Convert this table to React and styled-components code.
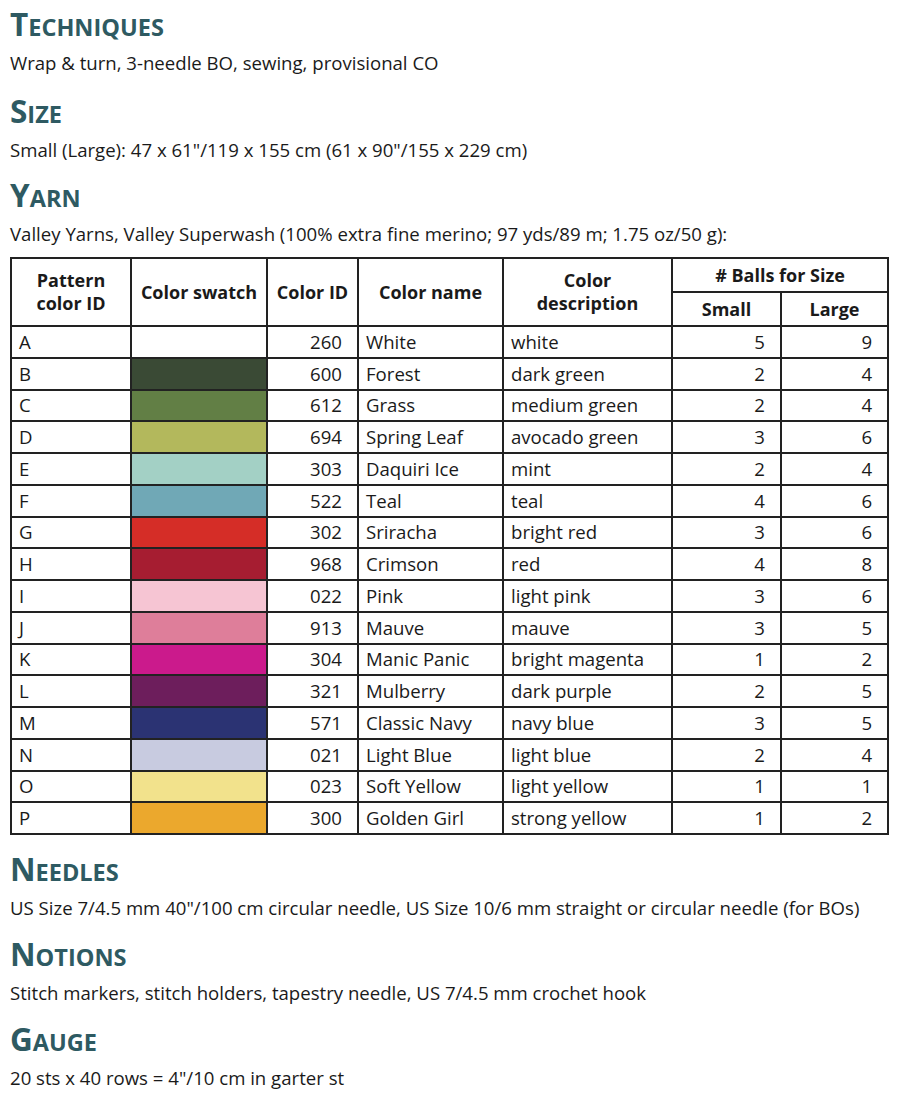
import React from "react";
import styled, { createGlobalStyle } from "styled-components";

const GlobalStyle = createGlobalStyle`
  html, body {
    margin: 0;
    padding: 0;
    background: #fff;
  }
  body {
    font-family: "Open Sans", "Liberation Sans", sans-serif;
    color: #1a1a1a;
  }
`;

const Page = styled.div`
  width: 903px;
  padding: 6px 0 0 10px;
  box-sizing: border-box;
`;

const Section = styled.section`
  margin-top: ${(p) => p.$gap || 0}px;
`;

const Heading = styled.h2`
  margin: 0;
  font-size: 31.5px;
  line-height: 36px;
  font-weight: 700;
  color: #2e5a62;
  text-transform: uppercase;
`;

const SmallCaps = styled.span`
  font-size: 23.5px;
`;

const Body = styled.p`
  margin: 6px 0 0;
  font-size: 18.6px;
  line-height: 24px;
  white-space: nowrap;
`;

const Table = styled.table`
  margin-top: 11px;
  width: 877px;
  border-collapse: collapse;
  table-layout: fixed;
  font-size: 18.6px;
`;

const Th = styled.th`
  border: 2px solid #222;
  font-size: 18px;
  line-height: 23px;
  font-weight: 700;
  text-align: center;
  padding: 0 2px;
  height: 32px;
  white-space: nowrap;
`;

const Td = styled.td`
  border: 2px solid #222;
  height: 29.75px;
  padding: 0 ${(p) => (p.$align === "right" ? 15 : 7)}px 0 ${(p) => (p.$align === "right" ? 4 : 7)}px;
  text-align: ${(p) => p.$align || "left"};
  line-height: 24px;
  white-space: nowrap;
`;

const Swatch = styled.td`
  border: 2px solid #222;
  padding: 0;
  background: ${(p) => p.$color};
`;

const yarns = [
  ["A", "#ffffff", "260", "White", "white", 5, 9],
  ["B", "#3a4a35", "600", "Forest", "dark green", 2, 4],
  ["C", "#627f45", "612", "Grass", "medium green", 2, 4],
  ["D", "#b3b85c", "694", "Spring Leaf", "avocado green", 3, 6],
  ["E", "#a3d0c5", "303", "Daquiri Ice", "mint", 2, 4],
  ["F", "#70a8b6", "522", "Teal", "teal", 4, 6],
  ["G", "#d52d27", "302", "Sriracha", "bright red", 3, 6],
  ["H", "#a61d31", "968", "Crimson", "red", 4, 8],
  ["I", "#f6c5d3", "022", "Pink", "light pink", 3, 6],
  ["J", "#de7e9a", "913", "Mauve", "mauve", 3, 5],
  ["K", "#cb1a8c", "304", "Manic Panic", "bright magenta", 1, 2],
  ["L", "#6d1e5c", "321", "Mulberry", "dark purple", 2, 5],
  ["M", "#2b3373", "571", "Classic Navy", "navy blue", 3, 5],
  ["N", "#c8cbe0", "021", "Light Blue", "light blue", 2, 4],
  ["O", "#f2e28c", "023", "Soft Yellow", "light yellow", 1, 1],
  ["P", "#eba82d", "300", "Golden Girl", "strong yellow", 1, 2],
];

const Title = ({ children }) => (
  <Heading>
    {children[0]}
    <SmallCaps>{children.slice(1)}</SmallCaps>
  </Heading>
);

const YarnTable = () => (
  <Table>
    <colgroup>
      <col style={{ width: 120 }} />
      <col style={{ width: 136 }} />
      <col style={{ width: 91 }} />
      <col style={{ width: 145 }} />
      <col style={{ width: 169 }} />
      <col style={{ width: 109 }} />
      <col style={{ width: 107 }} />
    </colgroup>
    <thead>
      <tr>
        <Th rowSpan={2}>
          Pattern
          <br />
          color ID
        </Th>
        <Th rowSpan={2}>Color swatch</Th>
        <Th rowSpan={2}>Color ID</Th>
        <Th rowSpan={2}>Color name</Th>
        <Th rowSpan={2}>
          Color
          <br />
          description
        </Th>
        <Th colSpan={2}># Balls for Size</Th>
      </tr>
      <tr>
        <Th>Small</Th>
        <Th>Large</Th>
      </tr>
    </thead>
    <tbody>
      {yarns.map(([id, color, code, name, desc, small, large]) => (
        <tr key={id}>
          <Td>{id}</Td>
          <Swatch $color={color} />
          <Td $align="right">{code}</Td>
          <Td>{name}</Td>
          <Td>{desc}</Td>
          <Td $align="right">{small}</Td>
          <Td $align="right">{large}</Td>
        </tr>
      ))}
    </tbody>
  </Table>
);

export default function App() {
  return (
    <Page>
      <GlobalStyle />
      <Section>
        <Title>Techniques</Title>
        <Body>Wrap &amp; turn, 3-needle BO, sewing, provisional CO</Body>
      </Section>
      <Section $gap={18}>
        <Title>Size</Title>
        <Body>Small (Large): 47 x 61"/119 x 155 cm (61 x 90"/155 x 229 cm)</Body>
      </Section>
      <Section $gap={15}>
        <Title>Yarn</Title>
        <Body>
          Valley Yarns, Valley Superwash (100% extra fine merino; 97 yds/89 m; 1.75 oz/50 g):
        </Body>
        <YarnTable />
      </Section>
      <Section $gap={16}>
        <Title>Needles</Title>
        <Body>
          US Size 7/4.5 mm 40"/100 cm circular needle, US Size 10/6 mm straight or circular needle (for BOs)
        </Body>
      </Section>
      <Section $gap={16}>
        <Title>Notions</Title>
        <Body>Stitch markers, stitch holders, tapestry needle, US 7/4.5 mm crochet hook</Body>
      </Section>
      <Section $gap={16}>
        <Title>Gauge</Title>
        <Body>20 sts x 40 rows = 4"/10 cm in garter st</Body>
      </Section>
    </Page>
  );
}
